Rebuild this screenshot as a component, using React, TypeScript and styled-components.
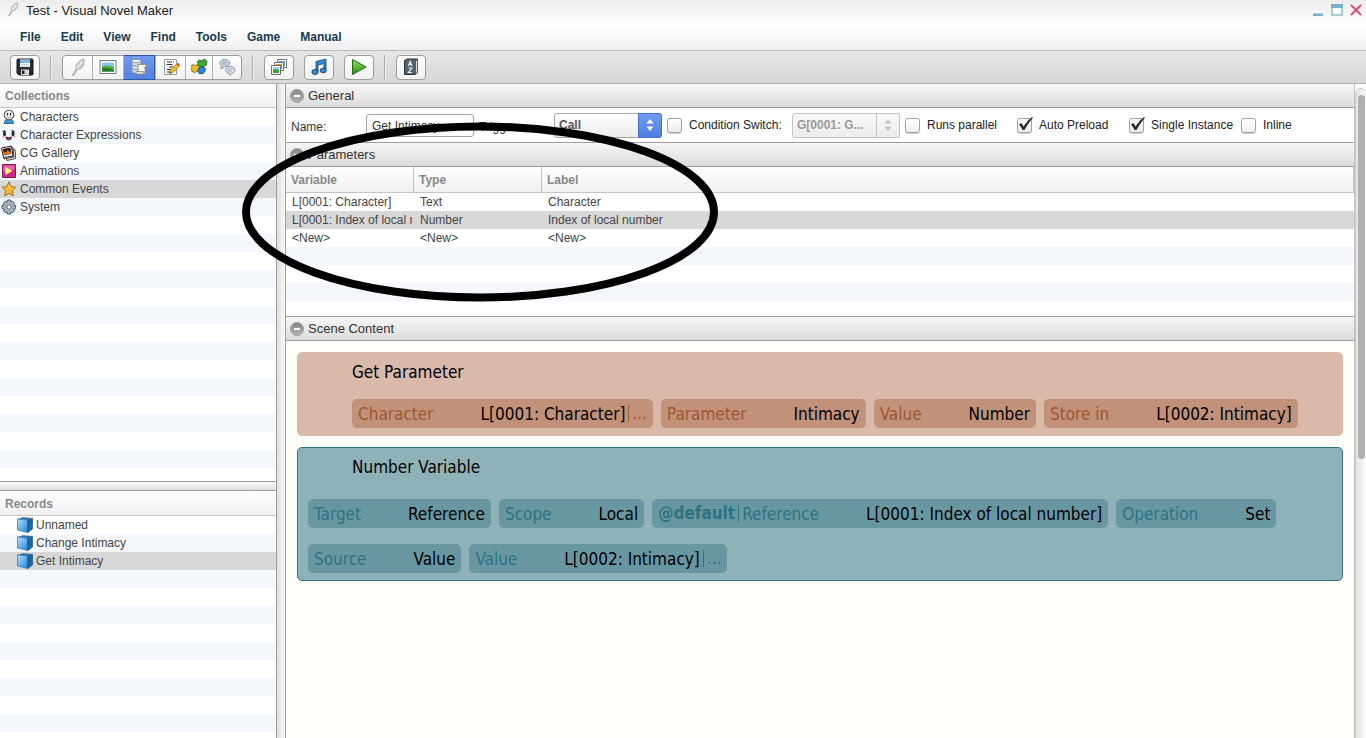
import React from "react";
import styled, { createGlobalStyle, css } from "styled-components";

const Global = createGlobalStyle`
  *, *::before, *::after { box-sizing: border-box; }
  body { margin: 0; background: #fff; }
  body, button, input, select, table {
    font-family: "Liberation Sans", Arial, sans-serif;
    font-size: 12px;
    line-height: 18px;
    color: #333;
  }
  button { margin: 0; padding: 0; border: 0; background: none; }
  ul { list-style: none; margin: 0; padding: 0; }
  h1, h2 { margin: 0; font-weight: normal; }
  svg { display: block; flex: none; }
`;

/* ---------- window frame ---------- */

const Window = styled.div`
  position: relative;
  display: flex;
  flex-direction: column;
  height: 100vh;
  overflow: hidden;
`;

const Chrome = styled.header`
  flex: none;
  height: 51px;
  border-bottom: 1px solid #bcbcbc;
  background: linear-gradient(#ececec, #fff 26px, #efefef);
`;

const TitleBar = styled.div`
  display: flex;
  justify-content: space-between;
  height: 24px;
  padding: 2px 4px 0 6px;
`;

const Title = styled.h1`
  display: flex;
  gap: 6px;
  font-size: 13px;
  line-height: 18px;
  color: #222;
`;

const WindowButtons = styled.div`
  display: flex;
  gap: 7px;
  padding-top: 2px;
  button { height: 12px; }
`;

const MenuBar = styled.nav`
  display: flex;
  gap: 20px;
  padding: 4px 0 0 20px;
`;

const MenuItem = styled.button`
  font-weight: bold;
  color: #173c50;
`;

const Toolbar = styled.div`
  display: flex;
  flex: none;
  align-items: center;
  height: 33px;
  padding: 0 10px;
  border-bottom: 1px solid #b4b4b4;
  background: linear-gradient(#e6e6e6, #d6d6d6);
`;

const ButtonGroup = styled.div`
  display: flex;
  height: 25px;
  margin-right: 10px;
  border: 1px solid #9c9c9c;
  border-radius: 4px;
  background: linear-gradient(#fff, #f1f1f1);
`;

const ToolButton = styled.button<{ $active?: boolean; $width?: number }>`
  display: flex;
  align-items: center;
  justify-content: center;
  width: ${(p) => p.$width ?? 28}px;
  & + & { border-left: 1px solid #b0b0b0; }
  ${(p) =>
    p.$active &&
    css`
      margin: -1px 0;
      border: 1px solid #2f58ad;
      background: linear-gradient(#7099ee, #5582de);
    `}
  ${(p) => p.$active && css`& + & { border-left: 1px solid #2f58ad; }`}
`;

const Divider = styled.span`
  width: 2px;
  height: 25px;
  margin-right: 10px;
  border-left: 1px solid #acacac;
  border-right: 1px solid #f0f0f0;
`;

const Body = styled.div`
  display: flex;
  flex: 1;
  min-height: 0;
`;

/* ---------- left column ---------- */

const Sidebar = styled.aside`
  display: grid;
  grid-template-rows: 397fr 10px 247fr;
  flex: none;
  width: 276px;
`;

const Panel = styled.section`
  display: flex;
  flex-direction: column;
  min-height: 0;
  overflow: hidden;
`;

const PanelTitle = styled.h2<{ $tall?: boolean }>`
  flex: none;
  height: ${(p) => (p.$tall ? 25 : 24)}px;
  padding: 0 5px;
  border-bottom: 1px solid #c8c8c8;
  background: linear-gradient(#fff, #f0f0f0);
  font-size: 12px;
  font-weight: bold;
  line-height: ${(p) => (p.$tall ? 26 : 24)}px;
  color: #888;
`;

const stripes = css`
  background: repeating-linear-gradient(#fff 0 18px, #f4f8fc 18px 36px);
`;

const List = styled.ul`
  flex: 1;
  ${stripes}
`;

const ListRow = styled.li<{ $selected?: boolean; $indent?: boolean }>`
  display: flex;
  align-items: center;
  gap: ${(p) => (p.$indent ? 3 : 4)}px;
  height: 18px;
  padding-left: ${(p) => (p.$indent ? 17 : 0)}px;
  color: #444;
  background: ${(p) => (p.$selected ? "#d8d8d8" : "transparent")};
`;

const RowSplitter = styled.div`
  border: solid #9e9e9e;
  border-width: 1px 0;
  background: linear-gradient(#fafafa, #dedede);
`;

const ColumnSplitter = styled.div`
  flex: none;
  width: 10px;
  border: solid #9e9e9e;
  border-width: 0 1px;
  background: linear-gradient(90deg, #dedede, #fafafa);
`;

/* ---------- editor ---------- */

const Editor = styled.main`
  display: flex;
  flex: 1;
  flex-direction: column;
  min-width: 0;
  border-right: 1px solid #bdbdbd;
`;

const SectionBar = styled.h2<{ $topLine?: boolean }>`
  display: flex;
  flex: none;
  align-items: center;
  gap: 4px;
  height: ${(p) => (p.$topLine ? 25 : 24)}px;
  padding-left: 4px;
  border-bottom: 1px solid #9c9c9c;
  border-top: ${(p) => (p.$topLine ? "1px solid #9c9c9c" : "0")};
  background: linear-gradient(#f7f7f7, #dbdbdb);
  font-size: 13px;
  color: #333;
`;

const Form = styled.form`
  display: flex;
  flex: none;
  align-items: center;
  height: 35px;
  padding-left: 5px;
  border-bottom: 1px solid #9c9c9c;
  background: #fff;
`;

const FieldLabel = styled.label`
  width: 75px;
  padding-top: 3px;
`;

const TextBox = styled.input`
  width: 108px;
  height: 23px;
  margin-right: 5px;
  padding: 2px 5px 0;
  border: 1px solid #a3a3a3;
  border-radius: 3px;
  background: #fff;
`;

const CheckLabel = styled.label<{ $width?: number }>`
  display: flex;
  align-items: center;
  gap: 7px;
  width: ${(p) => p.$width ?? 112}px;
  white-space: nowrap;
  color: #222;
`;

const CheckHolder = styled.span`
  position: relative;
  display: flex;
  svg { position: absolute; left: 0; top: -2px; pointer-events: none; }
`;

const CheckBox = styled.input`
  appearance: none;
  width: 15px;
  height: 15px;
  margin: 0;
  border: 1px solid #a0a0a0;
  border-radius: 3px;
  background: linear-gradient(#fff, #ededed);
  box-shadow: 0 1px 1px #ccc;
`;

const SelectHolder = styled.span`
  display: flex;
  position: relative;
  width: 108px;
  height: 25px;
  margin-right: 5px;
`;

const Select = styled.select`
  appearance: none;
  width: 100%;
  padding: 0 28px 0 4px;
  border: 1px solid #a8a8a8;
  border-radius: 3px;
  background: linear-gradient(#fff, #eaeaea);
  font-weight: bold;
  color: #555;
  opacity: 1;
  &:disabled { border-color: #c4c4c4; color: #999; background: linear-gradient(#fafafa, #ececec); }
`;

const Stepper = styled.span<{ $disabled?: boolean }>`
  position: absolute;
  top: 0;
  right: 0;
  display: flex;
  align-items: center;
  justify-content: center;
  width: 24px;
  height: 25px;
  border: 1px solid ${(p) => (p.$disabled ? "#c4c4c4" : "#3f6fd0")};
  border-radius: 0 3px 3px 0;
  background: ${(p) => (p.$disabled ? "linear-gradient(#fafafa, #ececec)" : "linear-gradient(#709bf0, #4d7fe0)")};
  color: ${(p) => (p.$disabled ? "#c2c2c2" : "#fff")};
  pointer-events: none;
`;

const TableArea = styled.div`
  flex: none;
  height: 149px;
  background: repeating-linear-gradient(#fff 0 18px, #f4f8fc 18px 36px) 0 26px no-repeat;
`;

const Table = styled.table`
  width: 100%;
  table-layout: fixed;
  border-collapse: separate;
  border-spacing: 0;
  text-align: left;
  th {
    height: 26px;
    padding: 1px 5px 0;
    border: solid #c4c4c4;
    border-width: 0 1px 1px 0;
    background: linear-gradient(#fff, #f0f0f0);
    color: #888;
  }
  td {
    height: 18px;
    padding: 0 2px 0 6px;
    color: #444;
  }
`;

const CellText = styled.div`
  overflow: hidden;
  white-space: nowrap;
`;

const Col = styled.col<{ $width?: number }>`
  width: ${(p) => (p.$width ? p.$width + "px" : "auto")};
`;

const TableRow = styled.tr<{ $selected?: boolean }>`
  background: ${(p) => (p.$selected ? "#d8d8d8" : "transparent")};
`;

/* ---------- scene commands ---------- */

const Scene = styled.div`
  display: flex;
  flex: 1;
  flex-direction: column;
  gap: 11px;
  min-height: 0;
  padding: 11px;
  background: #fffffa;
`;

const tones = {
  clay: { back: "#d8b9aa", edge: "#d8b9aa", chip: "#c19179", label: "#9d5733" },
  teal: { back: "#8eb2b7", edge: "#2c7482", chip: "#6997a1", label: "#2c7482" },
};
type Tone = keyof typeof tones;

const Command = styled.article<{ $tone: Tone }>`
  padding: 9px 10px 7px;
  border: 1px solid ${(p) => tones[p.$tone].edge};
  border-radius: 5px;
  background: ${(p) => tones[p.$tone].back};
  font-family: "DejaVu Sans Condensed", Tahoma, sans-serif;
  font-size: 17px;
  line-height: 20px;
  color: #000;
`;

const CommandTitle = styled.div`
  padding-left: 44px;
`;

const Chips = styled.div<{ $indent?: boolean; $space: number }>`
  display: flex;
  flex-wrap: wrap;
  gap: 16px 8px;
  margin-top: ${(p) => p.$space}px;
  padding-left: ${(p) => (p.$indent ? 44 : 0)}px;
`;

const Chip = styled.button<{ $tone: Tone }>`
  display: flex;
  align-items: center;
  height: 29px;
  padding: 0 6px;
  border-radius: 5px;
  background: ${(p) => tones[p.$tone].chip};
  font: inherit;
  color: #000;
  white-space: nowrap;
`;

const ChipLabel = styled.span<{ $tone: Tone }>`
  margin-right: 47px;
  color: ${(p) => tones[p.$tone].label};
`;

const ChipExtra = styled.span<{ $tone: Tone; $lead?: boolean }>`
  color: ${(p) => tones[p.$tone].label};
  font-weight: ${(p) => (p.$lead ? "bold" : "normal")};
  border: solid ${(p) => tones[p.$tone].label};
  border-width: ${(p) => (p.$lead ? "0 1px 0 0" : "0 0 0 1px")};
  padding: ${(p) => (p.$lead ? "0 3px 0 0" : "0 0 0 3px")};
  margin: 0 3px;
  line-height: 17px;
  ${(p) => (p.$lead ? "margin-left: 0;" : "margin-right: 0;")}
`;

/* ---------- scroll bar ---------- */

const ScrollTrack = styled.div`
  display: grid;
  grid-template-rows: 364fr 279fr;
  flex: none;
  width: 11px;
  margin-top: 4px;
  padding: 6px 1px 0 2px;
  border-left: 1px solid #d0d0d0;
  border-top: 1px solid #c6c6c6;
  border-radius: 8px 8px 0 0;
  background: linear-gradient(90deg, #e2e2e2, #fafafa);
`;

const ScrollThumb = styled.div`
  border-radius: 4px;
  background: #b0b0b0;
`;

const Marker = styled.svg`
  position: absolute;
  left: 240px;
  top: 120px;
  pointer-events: none;
`;

/* ---------- icons ---------- */

const Quill = ({ size = 16 }: { size?: number }) => (
  <svg width={size} height={size} viewBox="0 0 16 16">
    <path d="M3 15.500 6.500 9C5.500 6 8 3 13 .8c1.200 1.400 0 2.500 0 3.600.6 3-2.500 5.300-5.200 5.600L3.900 15.800z" fill="#c9cdcf" stroke="#8d9295" strokeWidth=".6" />
    <path d="M7 9 12 3" stroke="#f6f6f6" strokeWidth="1.200" />
  </svg>
);

const Floppy = () => (
  <svg width="18" height="18" viewBox="0 0 18 18">
    <path d="M1 2q0-1 1-1h14q1 0 1 1v14q0 1-1 1H3l-2-2z" fill="#2b2d33" stroke="#15161a" />
    <path d="M4 1.500h10V9H4z" fill="#eaf5fc" />
    <path d="M4 1.500h10V5H4z" fill="#7db7e3" />
    <path d="M5 6.500h8M5 8h8" stroke="#b4cddd" strokeWidth=".7" />
    <path d="M5 11.500h8V17H5z" fill="#d6d9dc" />
    <path d="M6 12.500h2.500V16H6z" fill="#202126" />
  </svg>
);

const Photo = () => (
  <svg width="18" height="16" viewBox="0 0 18 16">
    <path d="M1 1.500h16v13H1z" fill="#fff" stroke="#74787a" />
    <path d="M3 3.500h12v9H3z" fill="#8bc8ee" />
    <path d="M3 7.500q6-2 12 .5v4.500H3z" fill="#5bb043" />
    <path d="M3 9q7-1 12 2v1.500H3z" fill="#257a31" />
  </svg>
);

const DatabaseScript = () => (
  <svg width="18" height="18" viewBox="0 0 18 18">
    <path d="M2 3v10c0 3 9 3 9 0V3" fill="#d3dbe2" stroke="#7d8c98" strokeWidth=".8" />
    <ellipse cx="6.500" cy="3" rx="4.500" ry="1.800" fill="#edf2f5" stroke="#7d8c98" strokeWidth=".8" />
    <path d="M2 6.500c1 2 8 2 9 0M2 10c1 2 8 2 9 0" fill="none" stroke="#8b9aa7" />
    <path d="M8 6.500h8.500v2H15V16H7.500q-2 0-1.500-2.500h2z" fill="#f3f1ec" stroke="#8b8780" strokeWidth=".8" />
    <path d="M6 13.500h7.500q-.5 2.500 1.500 2.500" fill="#d8d5cf" stroke="#8b8780" strokeWidth=".8" />
  </svg>
);

const NotePencil = () => (
  <svg width="18" height="18" viewBox="0 0 18 18">
    <path d="M2.500 1.500h12v15h-12z" fill="#fff" stroke="#858585" strokeWidth=".8" />
    <path d="M5 4h5m1 0h1M4.500 6.500h6M7 9h5M5 11.500h4M5 14h3" stroke="#333" strokeWidth="1.100" />
    <path d="m7.500 15.500 1-3.500L14.500 6 17 8.500 11 14.500z" fill="#f2c42a" stroke="#8b5e15" strokeWidth=".7" />
    <path d="m14.500 6 1.200-1q1.800 0 2.100 2.200L17 8.500z" fill="#d7452f" />
    <path d="m7.500 15.500.5-1.500 1 1z" fill="#222" />
  </svg>
);

const Puzzle = () => (
  <svg width="18" height="18" viewBox="0 0 18 18">
    <path d="M8 3q2-2 3 0 1-1 2-1 2-2 3 .5 2 1 .5 3 .5 2-2 2.500-1 2-3 .5-2 1.500-3-.5-2-1-.5-2.500Q6.500 4 8 3z" fill="#40a735" stroke="#1c5b20" strokeWidth=".8" />
    <path d="M2 7q2-1 3 .5Q7 6 8 8.500q2 1 .5 2.500.5 2-2 2-1 3-3 1-2.500 0-1.500-2Q0 11 2 9.500 1 8 2 7z" fill="#e9bd22" stroke="#7e5e12" strokeWidth=".8" />
    <path d="M9 10q1-2 3-.5Q14 8 14.500 10q2 1 .5 2.500.5 2-1.500 2Q13 17 11 15.500q-2 1-2.500-1-2-1 0-2.500z" fill="#2a86d3" stroke="#124678" strokeWidth=".8" />
  </svg>
);

const Chat = () => (
  <svg width="18" height="18" viewBox="0 0 18 18">
    <path d="M6.500 1.500c7 0 7 7 0 7L3 11V7.500C.5 5.500 2 1.500 6.500 1.500z" fill="#cbd7df" stroke="#80919c" strokeWidth=".9" />
    <path d="M4 4.300h5M4 6h4" stroke="#8799a6" strokeWidth=".8" />
    <path d="M12 8.500c6 0 6.500 6 1.500 6.700L12 17.500l-1-2.300C5.500 14 6.500 8.500 12 8.500z" fill="#dbe5eb" stroke="#80919c" strokeWidth=".9" />
    <path d="M9.500 11h5m-5 2h4" stroke="#8799a6" strokeWidth=".8" />
  </svg>
);

const Pictures = () => (
  <svg width="18" height="18" viewBox="0 0 18 18">
    <path d="M7.500 1.500h9v8h-9z" fill="#fff" stroke="#6f6f6f" />
    <path d="M9 3h6v5H9z" fill="#68a8d8" />
    <path d="M4.500 4.500h9v8h-9z" fill="#fff" stroke="#6f6f6f" />
    <path d="M6 6h6v5H6z" fill="#e08c25" />
    <path d="M1.500 7.500h9v9h-9z" fill="#fff" stroke="#6f6f6f" />
    <path d="M3 9h6v6H3z" fill="#9cd3f3" />
    <path d="M3 12q3-2 6 0v3H3z" fill="#43a035" />
  </svg>
);

const Music = () => (
  <svg width="18" height="18" viewBox="0 0 18 18">
    <path d="M6 3.500 16 1v11.500h-2V5.500L8 7v7H6z" fill="#2f8bd2" stroke="#123f6b" strokeWidth=".8" />
    <ellipse cx="5" cy="14" rx="3.200" ry="2.400" fill="#2f8bd2" stroke="#123f6b" strokeWidth=".9" />
    <ellipse cx="13.200" cy="12.500" rx="3" ry="2.300" fill="#2f8bd2" stroke="#123f6b" strokeWidth=".9" />
  </svg>
);

const Play = () => (
  <svg width="18" height="18" viewBox="0 0 18 18">
    <defs>
      <linearGradient id="play" x2="0" y2="1"><stop stopColor="#8ee356" /><stop offset="1" stopColor="#24900f" /></linearGradient>
    </defs>
    <path d="M2.500 1.500 16 9 2.500 16.500z" fill="url(#play)" stroke="#1c6b12" strokeLinejoin="round" />
  </svg>
);

const Dictionary = () => (
  <svg width="16" height="18" viewBox="0 0 16 18">
    <path d="M1.500 2.500 4 1h10.500v13.500L12 16.500H1.500z" fill="#53626d" stroke="#28323a" />
    <path d="M12.500 3v13l2-1.700V1.500z" fill="#e2e2e2" stroke="#38444c" strokeWidth=".7" />
    <path d="m5.500 8 1.700-4.500L9 8M6 6.500h2.500M5.500 10h3.300L5.500 14.500H9" fill="none" stroke="#f3f3f3" strokeWidth="1.200" />
  </svg>
);

const Person = () => (
  <svg width="16" height="16" viewBox="0 0 16 16">
    <path d="M4 14.500Q4.500 10 9 10t4.500 4.500z" fill="#3a9bd0" stroke="#1d5378" strokeWidth=".8" />
    <circle cx="9" cy="6" r="4.800" fill="#f5f5f5" stroke="#555" strokeWidth="1.100" />
    <path d="M7.500 4v2.500m3-2.500v2.500" stroke="#222" strokeWidth="1.200" />
    <path d="M7 8.200q2 1.300 4 0" fill="none" stroke="#777" strokeWidth=".7" />
  </svg>
);

const Face = () => (
  <svg width="16" height="16" viewBox="0 0 16 16">
    <path d="M2.500 4.500 5.300 3.500M11.500 3.500l3.200 1" stroke="#333" />
    <ellipse cx="4.500" cy="6.500" rx="1.500" ry="2.800" fill="#292929" />
    <ellipse cx="13" cy="6.500" rx="1.500" ry="2.800" fill="#292929" />
    <path d="M2 9.800h2.500m8.500 0h2.500" stroke="#f2a6cc" strokeWidth="1.500" />
    <path d="M5.500 9.500q3.500 1.500 6.500 0-.5 4-3.200 4T5.500 9.500z" fill="#3a2030" />
    <path d="M7 12q2-1.500 4 0-2 2-4 0z" fill="#d83c98" />
  </svg>
);

const Gallery = () => (
  <svg width="16" height="16" viewBox="0 0 16 16">
    <path d="m5 6 10-1.500.8 9L7 15.500z" fill="#eee" stroke="#333" strokeWidth=".9" />
    <path d="m3 4 10-1.500 1 9.500L4 14z" fill="#ddd" stroke="#333" strokeWidth=".9" />
    <path d="m1.500 3 10-2 1.500 10-9.500 1.500z" fill="#fff" stroke="#222" />
    <path d="m2.800 4 7.700-1.500L11.500 9 4 10.300z" fill="#3d1410" />
    <path d="m3.800 9.500 1-3 1.500 1 1.500-3 1.200 2.500 1.500-1 .5 3z" fill="#ee7a20" />
  </svg>
);

const Animation = () => (
  <svg width="16" height="16" viewBox="0 0 16 16">
    <path d="M2.500 1.500h13v13h-13z" fill="#c92b82" stroke="#871755" />
    <path d="M3.500 2.500h11v4q-6 0-11 3z" fill="#e365a7" />
    <path d="m5.500 4 7 4-7 4z" fill="#fff27a" />
  </svg>
);

const Star = () => (
  <svg width="16" height="16" viewBox="0 0 16 16">
    <path d="m9 .9 2.200 4.700 4.600.7-3.400 3.500.9 5.100L9 12.500l-4.300 2.400.9-5.100-3.400-3.500 4.600-.7z" fill="#fbb52c" stroke="#8e6a26" strokeWidth=".9" strokeLinejoin="round" />
    <path d="m9 3 1.500 3.500 3 .5L9 8z" fill="#fdd675" />
  </svg>
);

const Gear = () => (
  <svg width="16" height="16" viewBox="0 0 16 16">
    <path d="M7.500 1h3l.5 2 1.500-.7 2 2-.8 1.700 2 .6v3l-2 .5.8 1.700-2 2-1.500-.8-.5 2h-3l-.5-2-1.700.8-2-2 .8-1.700-2-.5v-3l2-.6-.8-1.700 2-2L7 3z" fill="#a9b5c3" stroke="#4a5563" />
    <circle cx="9" cy="8" r="4" fill="#c3cdd9" stroke="#8a95a2" strokeWidth=".7" />
    <circle cx="9" cy="8" r="2.200" fill="#fff" stroke="#4a5563" />
  </svg>
);

const Cube = () => (
  <svg width="16" height="16" viewBox="0 0 16 16">
    <defs>
      <linearGradient id="cube" x2="1" y2="1"><stop stopColor="#b7e0ff" /><stop offset="1" stopColor="#1d84dc" /></linearGradient>
    </defs>
    <path d="M.5 2 6 .3l9.500.7-4.700 2z" fill="#356f9d" />
    <path d="M.5 2l10.300 1.200v12.300L.5 13z" fill="url(#cube)" stroke="#1f6fae" strokeWidth=".7" />
    <path d="m10.800 3.200 4.700-2V12l-4.700 3.500z" fill="#1a68a3" stroke="#0e4671" strokeWidth=".6" />
  </svg>
);

const Collapse = () => (
  <svg width="14" height="14" viewBox="0 0 14 14">
    <defs>
      <linearGradient id="knob" x2="0" y2="1"><stop stopColor="#858585" /><stop offset="1" stopColor="#b4b4b4" /></linearGradient>
    </defs>
    <circle cx="7" cy="7" r="6.500" fill="url(#knob)" stroke="#a0a0a0" />
    <path d="M4 7h6" stroke="#fff" strokeWidth="2" />
  </svg>
);

const Tick = () => (
  <svg width="18" height="16" viewBox="0 0 18 16">
    <path d="M2 8.500 4.500 7l2 3.500Q9.500 5 15 1l1 .8Q11 7.500 7.500 14H5.500Q4 10.500 2 8.500z" fill="#2b2b2b" />
  </svg>
);

const Arrows = () => (
  <svg width="8" height="14" viewBox="0 0 8 14">
    <path d="M4 1 7.500 5.500H.5zM4 13 .5 8.500h7z" fill="currentColor" />
  </svg>
);

/* ---------- parts ---------- */

const menus = ["File", "Edit", "View", "Find", "Tools", "Game", "Manual"];

const collections = [
  { name: "Characters", icon: <Person /> },
  { name: "Character Expressions", icon: <Face /> },
  { name: "CG Gallery", icon: <Gallery /> },
  { name: "Animations", icon: <Animation /> },
  { name: "Common Events", icon: <Star />, selected: true },
  { name: "System", icon: <Gear /> },
];

const records = ["Unnamed", "Change Intimacy", "Get Intimacy"];

const parameters = [
  ["L[0001: Character]", "Text", "Character"],
  ["L[0001: Index of local number]", "Number", "Index of local number"],
  ["<New>", "<New>", "<New>"],
];

type Param = { label: string; value: string; lead?: string; more?: boolean };

const getParameter: Param[] = [
  { label: "Character", value: "L[0001: Character]", more: true },
  { label: "Parameter", value: "Intimacy" },
  { label: "Value", value: "Number" },
  { label: "Store in", value: "L[0002: Intimacy]" },
];

const numberVariable: Param[] = [
  { label: "Target", value: "Reference" },
  { label: "Scope", value: "Local" },
  { label: "Reference", value: "L[0001: Index of local number]", lead: "@default" },
  { label: "Operation", value: "Set" },
  { label: "Source", value: "Value" },
  { label: "Value", value: "L[0002: Intimacy]", more: true },
];

const ParamChips = ({ tone, items, indent, space }: { tone: Tone; items: Param[]; indent?: boolean; space: number }) => (
  <Chips $indent={indent} $space={space}>
    {items.map((p) => (
      <Chip key={p.label + p.value} type="button" $tone={tone}>
        {p.lead && <ChipExtra $tone={tone} $lead>{p.lead}</ChipExtra>}
        <ChipLabel $tone={tone}>{p.label}</ChipLabel>
        <span>{p.value}</span>
        {p.more && <ChipExtra $tone={tone}>...</ChipExtra>}
      </Chip>
    ))}
  </Chips>
);

const Check = ({ label, width, initial = false }: { label: string; width?: number; initial?: boolean }) => {
  const [on, setOn] = React.useState(initial);
  return (
    <CheckLabel $width={width}>
      <CheckHolder>
        <CheckBox type="checkbox" checked={on} onChange={(e) => setOn(e.target.checked)} />
        {on && <Tick />}
      </CheckHolder>
      {label}
    </CheckLabel>
  );
};

const Tool = ({ name, children }: { name: string; children: React.ReactNode }) => (
  <ButtonGroup>
    <ToolButton aria-label={name}>{children}</ToolButton>
  </ButtonGroup>
);

export default function App() {
  return (
    <Window>
      <Global />
      <Chrome>
        <TitleBar>
          <Title><Quill size={14} />Test - Visual Novel Maker</Title>
          <WindowButtons>
            <button aria-label="Minimize">
              <svg width="11" height="12"><path d="M0 9.500h10v2.500H0z" fill="#76b0ca" /></svg>
            </button>
            <button aria-label="Maximize">
              <svg width="12" height="12"><path d="M1 1h10v10H1z" fill="#fff" stroke="#8abcd2" strokeWidth="1.500" /><path d="M0 0h12v4H0z" fill="#76b0ca" /></svg>
            </button>
            <button aria-label="Close">
              <svg width="12" height="12"><path d="m1 1 10 10M11 1 1 11" stroke="#e8457a" strokeWidth="1.800" /></svg>
            </button>
          </WindowButtons>
        </TitleBar>
        <MenuBar>
          {menus.map((m) => <MenuItem key={m}>{m}</MenuItem>)}
        </MenuBar>
      </Chrome>

      <Toolbar>
        <Tool name="Save"><Floppy /></Tool>
        <Divider />
        <ButtonGroup>
          <ToolButton aria-label="Story" $width={29}><Quill size={18} /></ToolButton>
          <ToolButton aria-label="Resources" $width={31}><Photo /></ToolButton>
          <ToolButton aria-label="Database" $width={32} $active><DatabaseScript /></ToolButton>
          <ToolButton aria-label="Scripts" $width={30}><NotePencil /></ToolButton>
          <ToolButton aria-label="Plugins" $width={27}><Puzzle /></ToolButton>
          <ToolButton aria-label="Localization" $width={29}><Chat /></ToolButton>
        </ButtonGroup>
        <Divider />
        <Tool name="Pictures"><Pictures /></Tool>
        <Tool name="Music"><Music /></Tool>
        <Tool name="Play"><Play /></Tool>
        <Divider />
        <Tool name="Dictionary"><Dictionary /></Tool>
      </Toolbar>

      <Body>
        <Sidebar>
          <Panel>
            <PanelTitle>Collections</PanelTitle>
            <List>
              {collections.map((c) => (
                <ListRow key={c.name} $selected={c.selected}>{c.icon}{c.name}</ListRow>
              ))}
            </List>
          </Panel>
          <RowSplitter />
          <Panel>
            <PanelTitle $tall>Records</PanelTitle>
            <List>
              {records.map((r) => (
                <ListRow key={r} $indent $selected={r === "Get Intimacy"}><Cube />{r}</ListRow>
              ))}
            </List>
          </Panel>
        </Sidebar>
        <ColumnSplitter />

        <Editor>
          <SectionBar><Collapse />General</SectionBar>
          <Form>
            <FieldLabel htmlFor="name">Name:</FieldLabel>
            <TextBox id="name" defaultValue="Get Intimacy" />
            <FieldLabel htmlFor="trigger">Trigger:</FieldLabel>
            <SelectHolder>
              <Select id="trigger"><option>Call</option></Select>
              <Stepper><Arrows /></Stepper>
            </SelectHolder>
            <Check label="Condition Switch:" width={125} />
            <SelectHolder>
              <Select disabled aria-label="Condition Switch"><option>G[0001: G...</option></Select>
              <Stepper $disabled><Arrows /></Stepper>
            </SelectHolder>
            <Check label="Runs parallel" />
            <Check label="Auto Preload" initial />
            <Check label="Single Instance" initial />
            <Check label="Inline" />
          </Form>

          <SectionBar><Collapse />Parameters</SectionBar>
          <TableArea>
            <Table>
              <colgroup><Col $width={128} /><Col $width={128} /><Col /></colgroup>
              <thead>
                <tr><th>Variable</th><th>Type</th><th>Label</th></tr>
              </thead>
              <tbody>
                {parameters.map((row, i) => (
                  <TableRow key={row[0]} $selected={i === 1}>
                    {row.map((cell, j) => <td key={j}><CellText>{cell}</CellText></td>)}
                  </TableRow>
                ))}
              </tbody>
            </Table>
          </TableArea>

          <SectionBar $topLine><Collapse />Scene Content</SectionBar>
          <Scene>
            <Command $tone="clay">
              <CommandTitle>Get Parameter</CommandTitle>
              <ParamChips tone="clay" items={getParameter} indent space={17} />
            </Command>
            <Command $tone="teal">
              <CommandTitle>Number Variable</CommandTitle>
              <ParamChips tone="teal" items={numberVariable} space={22} />
            </Command>
          </Scene>
        </Editor>
        <ScrollTrack><ScrollThumb /></ScrollTrack>
      </Body>

      <Marker width="480" height="184" viewBox="0 0 480 184">
        <ellipse cx="240" cy="92" rx="234" ry="85.500" fill="none" stroke="#000" strokeWidth="8" />
      </Marker>
    </Window>
  );
}
